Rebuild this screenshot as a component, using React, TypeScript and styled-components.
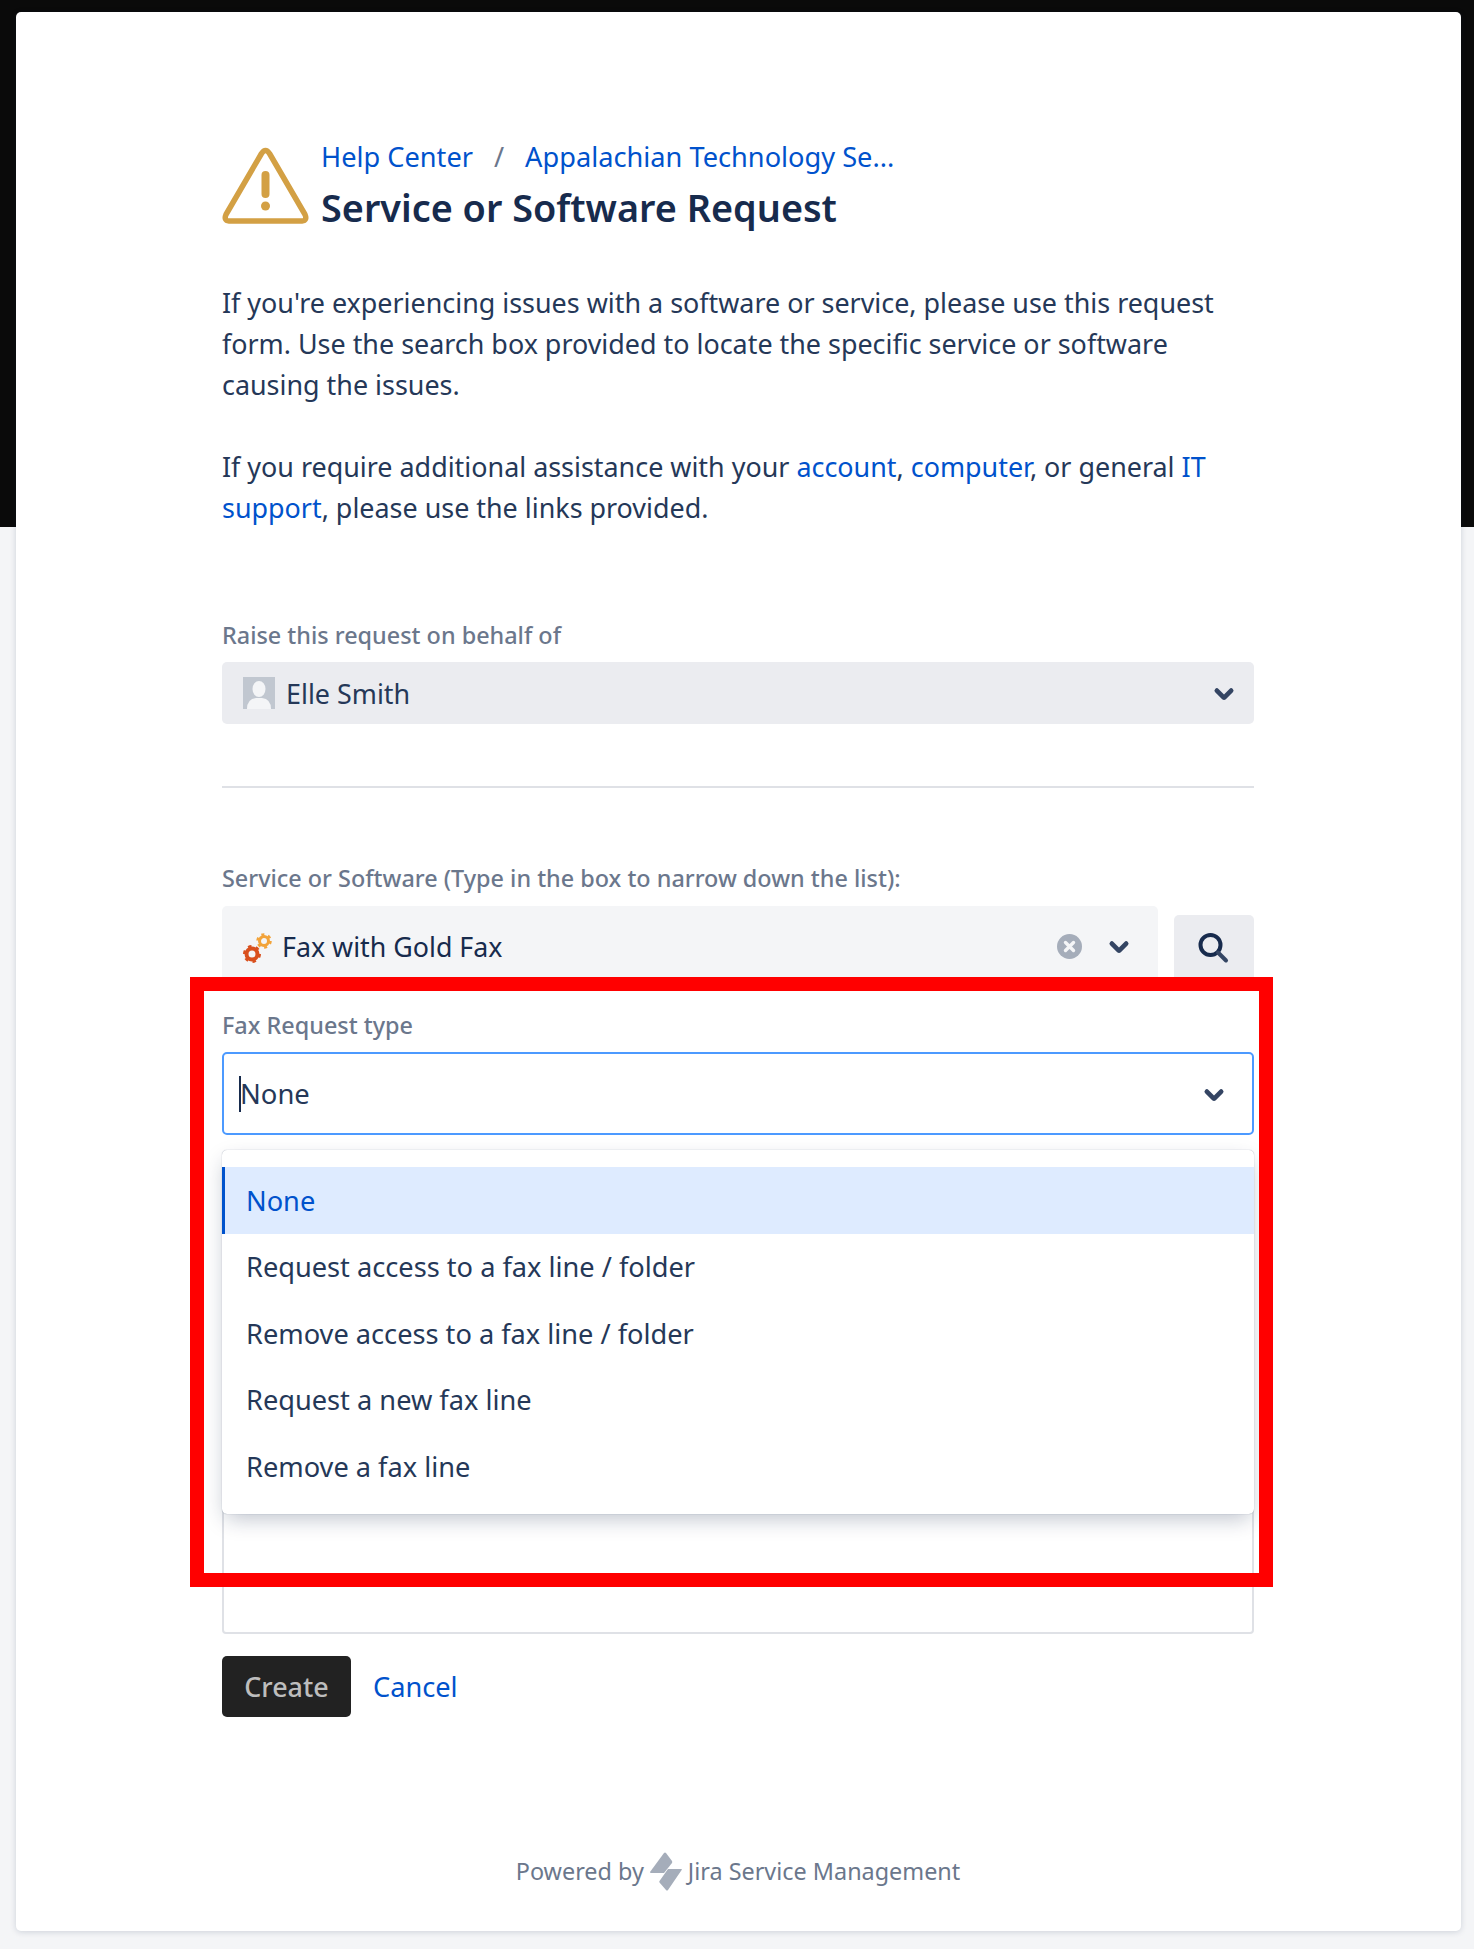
import React from 'react';
import styled, { createGlobalStyle } from 'styled-components';

const GlobalStyle = createGlobalStyle`
  html, body {
    margin: 0;
    padding: 0;
    background: #f4f5f7;
  }
  * {
    box-sizing: border-box;
  }
`;

const Page = styled.div`
  height: 1949px;
  overflow: hidden;
  padding: 12px 13px 0 16px;
  background: linear-gradient(#0a0a0a 527px, #f4f5f7 527px);
  font-family: 'Noto Sans', 'Open Sans', sans-serif;
  color: #253858;
`;

const Card = styled.main`
  position: relative;
  width: 1445px;
  height: 1919px;
  padding: 127px 207px 0 206px;
  background: #fff;
  border-radius: 5px;
  box-shadow: 0 1px 6px rgba(9, 30, 66, 0.16);
`;

const Header = styled.header`
  display: flex;
  gap: 12px;
`;

const WarningIcon = styled.svg`
  flex: none;
  width: 87px;
  height: 78px;
  margin-top: 7px;
`;

const Breadcrumbs = styled.nav`
  display: flex;
  height: 36px;
  align-items: center;
  font-size: 27.2px;
  line-height: 36px;
`;

const Separator = styled.span`
  margin: 0 21px;
  color: #6b778c;
`;

const Title = styled.h1`
  margin: 11px 0 0;
  color: #172b4d;
  font-size: 37.8px;
  font-weight: 600;
  line-height: 44px;
  white-space: nowrap;
`;

const TextLink = styled.a`
  color: #0052cc;
  text-decoration: none;
`;

const Paragraph = styled.p<{ $top: number }>`
  margin: ${(p) => p.$top}px 0 0;
  font-size: 26.9px;
  line-height: 41px;
`;

const Label = styled.label<{ $top: number }>`
  display: block;
  margin-top: ${(p) => p.$top}px;
  color: #6b778c;
  font-size: 23.4px;
  font-weight: 500;
  line-height: 30px;
`;

const Select = styled.div`
  display: flex;
  height: 62px;
  margin-top: 12px;
  padding: 0 11px 0 21px;
  align-items: center;
  background: #ebecf0;
  border-radius: 5px;
  font-size: 26.9px;
`;

const Avatar = styled.svg`
  flex: none;
  width: 32px;
  height: 32px;
  margin-right: 11px;
`;

const Grow = styled.span`
  flex: 1;
`;

const Chevron = styled.svg`
  flex: none;
  width: 38px;
  height: 38px;
  color: #344563;
`;

const Divider = styled.hr`
  height: 2px;
  margin: 62px 0 0;
  border: 0;
  background: #dfe1e6;
`;

const ServiceRow = styled.div`
  display: flex;
  height: 71px;
  margin-top: 13px;
  gap: 16px;
`;

const ServiceSelect = styled.div`
  display: flex;
  flex: 1;
  padding: 9px 20px 0 21px;
  align-items: center;
  background: #f4f5f7;
  border-radius: 5px 5px 0 0;
  font-size: 26.8px;
  color: #172b4d;
`;

const GearIcon = styled.svg`
  flex: none;
  width: 29px;
  height: 31px;
  margin-right: 10px;
  margin-top: 4px;
`;

const ClearIcon = styled.svg`
  flex: none;
  width: 25px;
  height: 25px;
  margin-right: 18px;
`;

const SearchButton = styled.button`
  display: flex;
  width: 80px;
  margin-top: 9px;
  padding: 0 2px 0 0;
  align-items: center;
  justify-content: center;
  background: #ebecf0;
  border: 0;
  border-radius: 5px 5px 0 0;
  color: #172b4d;
`;

const SearchIcon = styled.svg`
  width: 32px;
  height: 32px;
  margin-top: 4px;
`;

const Highlighted = styled.section`
  position: relative;
`;

const RedFrame = styled.div`
  position: absolute;
  top: -33px;
  left: -32px;
  width: 1083px;
  height: 610px;
  border: 14px solid #ff0000;
  z-index: 3;
  pointer-events: none;
`;

const FocusedSelect = styled.div`
  display: flex;
  height: 83px;
  margin-top: 12px;
  padding: 0 19px 0 15px;
  align-items: center;
  background: #fff;
  border: 2px solid #4c9aff;
  border-radius: 5px;
  font-size: 27.4px;
`;

const Caret = styled.span`
  width: 2px;
  height: 36px;
  margin-right: -1px;
  background: #172b4d;
`;

const Menu = styled.ul`
  position: absolute;
  top: 140px;
  left: 0;
  right: 0;
  height: 364px;
  margin: 0;
  padding: 17px 0 0;
  list-style: none;
  background: #fff;
  border-radius: 5px;
  box-shadow: 0 0 1px rgba(9, 30, 66, 0.45), 0 8px 22px -4px rgba(9, 30, 66, 0.28);
  z-index: 2;
`;

const MenuItem = styled.li<{ $active?: boolean }>`
  display: flex;
  height: 66.5px;
  padding-left: 24px;
  align-items: center;
  background: ${(p) => (p.$active ? '#deebff' : 'transparent')};
  color: ${(p) => (p.$active ? '#0052cc' : '#253858')};
  font-size: 27.2px;
  box-shadow: ${(p) => (p.$active ? 'inset 3px 0 0 #0052cc' : 'none')};
`;

const TextArea = styled.div`
  height: 471px;
  margin-top: 28px;
  border: 2px solid #dfe1e6;
  border-radius: 4px;
`;

const Actions = styled.div`
  display: flex;
  margin-top: 22px;
  gap: 22px;
  align-items: center;
`;

const CreateButton = styled.button`
  width: 129px;
  height: 61px;
  padding: 0;
  background: #222;
  border: 0;
  border-radius: 5px;
  color: #bdbdbd;
  font-family: inherit;
  font-size: 26.9px;
  font-weight: 500;
`;

const CancelLink = styled(TextLink)`
  font-size: 27.2px;
`;

const Footer = styled.footer`
  display: flex;
  height: 30px;
  margin-top: 139px;
  gap: 6px;
  align-items: center;
  justify-content: center;
  color: #6b778c;
  font-size: 23.4px;
`;

const JiraLogo = styled.svg`
  flex: none;
  width: 32px;
  height: 39px;
`;

const ChevronDown = () => (
  <Chevron viewBox="4 4 16 16" aria-hidden="true">
    <path
      fill="currentColor"
      d="M8.292 10.293a1.009 1.009 0 000 1.419l2.939 2.965c.218.215.5.322.779.322s.556-.107.769-.322l2.93-2.955a1.01 1.01 0 000-1.419.987.987 0 00-1.406 0l-2.298 2.317-2.307-2.327a.99.99 0 00-1.406 0z"
    />
  </Chevron>
);

const options = [
  'None',
  'Request access to a fax line / folder',
  'Remove access to a fax line / folder',
  'Request a new fax line',
  'Remove a fax line',
];

export default function App(): JSX.Element {
  return (
    <>
      <GlobalStyle />
      <Page>
        <Card>
          <Header>
            <WarningIcon viewBox="0 0 87 78" aria-hidden="true">
              <path
                d="M39.5 7.5 Q43.5 1.5 47.5 7.5 L83 68.5 Q85.5 74.5 80 75 L7 75 Q1.5 74.5 4 68.5 Z"
                fill="none"
                stroke="#d3a044"
                strokeWidth="5.5"
                strokeLinejoin="round"
              />
              <rect x="39.5" y="25" width="8" height="27" rx="4" fill="#d3a044" />
              <circle cx="43.5" cy="60" r="4.5" fill="#d3a044" />
            </WarningIcon>
            <div>
              <Breadcrumbs>
                <TextLink>Help Center</TextLink>
                <Separator>/</Separator>
                <TextLink>Appalachian Technology Se...</TextLink>
              </Breadcrumbs>
              <Title>Service or Software Request</Title>
            </div>
          </Header>

          <Paragraph $top={52}>
            If you're experiencing issues with a software or service, please use this request
            form. Use the search box provided to locate the specific service or software causing
            the issues.
          </Paragraph>
          <Paragraph $top={41}>
            If you require additional assistance with your <TextLink>account</TextLink>,{' '}
            <TextLink>computer</TextLink>, or general <TextLink>IT support</TextLink>, please use
            the links provided.
          </Paragraph>

          <Label $top={92}>Raise this request on behalf of</Label>
          <Select>
            <Avatar viewBox="0 0 32 32" aria-hidden="true">
              <rect width="32" height="32" fill="#c1c7d0" />
              <ellipse cx="16" cy="12" rx="6.5" ry="8" fill="#f4f5f7" />
              <path d="M4 32 Q4 22 13 21 L19 21 Q28 22 28 32 Z" fill="#f4f5f7" />
            </Avatar>
            <Grow>Elle Smith</Grow>
            <ChevronDown />
          </Select>

          <Divider />

          <Label $top={75}>Service or Software (Type in the box to narrow down the list):</Label>
          <ServiceRow>
            <ServiceSelect>
              <GearIcon viewBox="0 0 29 31" aria-hidden="true">
                <circle cx="9" cy="21" r="5.5" fill="none" stroke="#d9501e" strokeWidth="4" />
                <circle cx="9" cy="21" r="7.5" fill="none" stroke="#d9501e" strokeWidth="3" strokeDasharray="3.4 4.4" />
                <circle cx="21" cy="8" r="4.5" fill="none" stroke="#f2a33a" strokeWidth="3" />
                <circle cx="21" cy="8" r="6.5" fill="none" stroke="#f2a33a" strokeWidth="2.5" strokeDasharray="3 3.8" />
              </GearIcon>
              <Grow>Fax with Gold Fax</Grow>
              <ClearIcon viewBox="0 0 25 25" aria-hidden="true">
                <circle cx="12.5" cy="12.5" r="12.5" fill="#a5adba" />
                <path d="M8.5 8.5 L16.5 16.5 M16.5 8.5 L8.5 16.5" stroke="#f4f5f7" strokeWidth="3.4" strokeLinecap="round" />
              </ClearIcon>
              <ChevronDown />
            </ServiceSelect>
            <SearchButton type="button" aria-label="Search">
              <SearchIcon viewBox="0 0 32 32" aria-hidden="true">
                <circle cx="13.5" cy="13" r="10" fill="none" stroke="currentColor" strokeWidth="4" />
                <path d="M21 20.5 L29 28.5" stroke="#344563" strokeWidth="4" strokeLinecap="round" />
              </SearchIcon>
            </SearchButton>
          </ServiceRow>

          <Highlighted>
            <RedFrame />
            <Label $top={33}>Fax Request type</Label>
            <FocusedSelect>
              <Caret />
              <Grow>None</Grow>
              <ChevronDown />
            </FocusedSelect>
            <Menu>
              {options.map((option, index) => (
                <MenuItem key={option} $active={index === 0}>
                  {option}
                </MenuItem>
              ))}
            </Menu>
          </Highlighted>

          <TextArea />

          <Actions>
            <CreateButton type="button">Create</CreateButton>
            <CancelLink>Cancel</CancelLink>
          </Actions>

          <Footer>
            <span>Powered by</span>
            <JiraLogo viewBox="0 0 32 39" aria-hidden="true">
              <path d="M0 20 L14 1 Q15 0 16 1 L22 9 Q22.5 10 22 11 L14 21 L1 21 Q0 21 0 20 Z" fill="#a5adba" />
              <path d="M32 17.5 L18 38 Q17 39 16 38 L9.5 30.5 Q9 29.5 9.5 29 L18 17 L31 17 Q32 17 32 17.5 Z" fill="#a5adba" />
            </JiraLogo>
            <span>Jira Service Management</span>
          </Footer>
        </Card>
      </Page>
    </>
  );
}
